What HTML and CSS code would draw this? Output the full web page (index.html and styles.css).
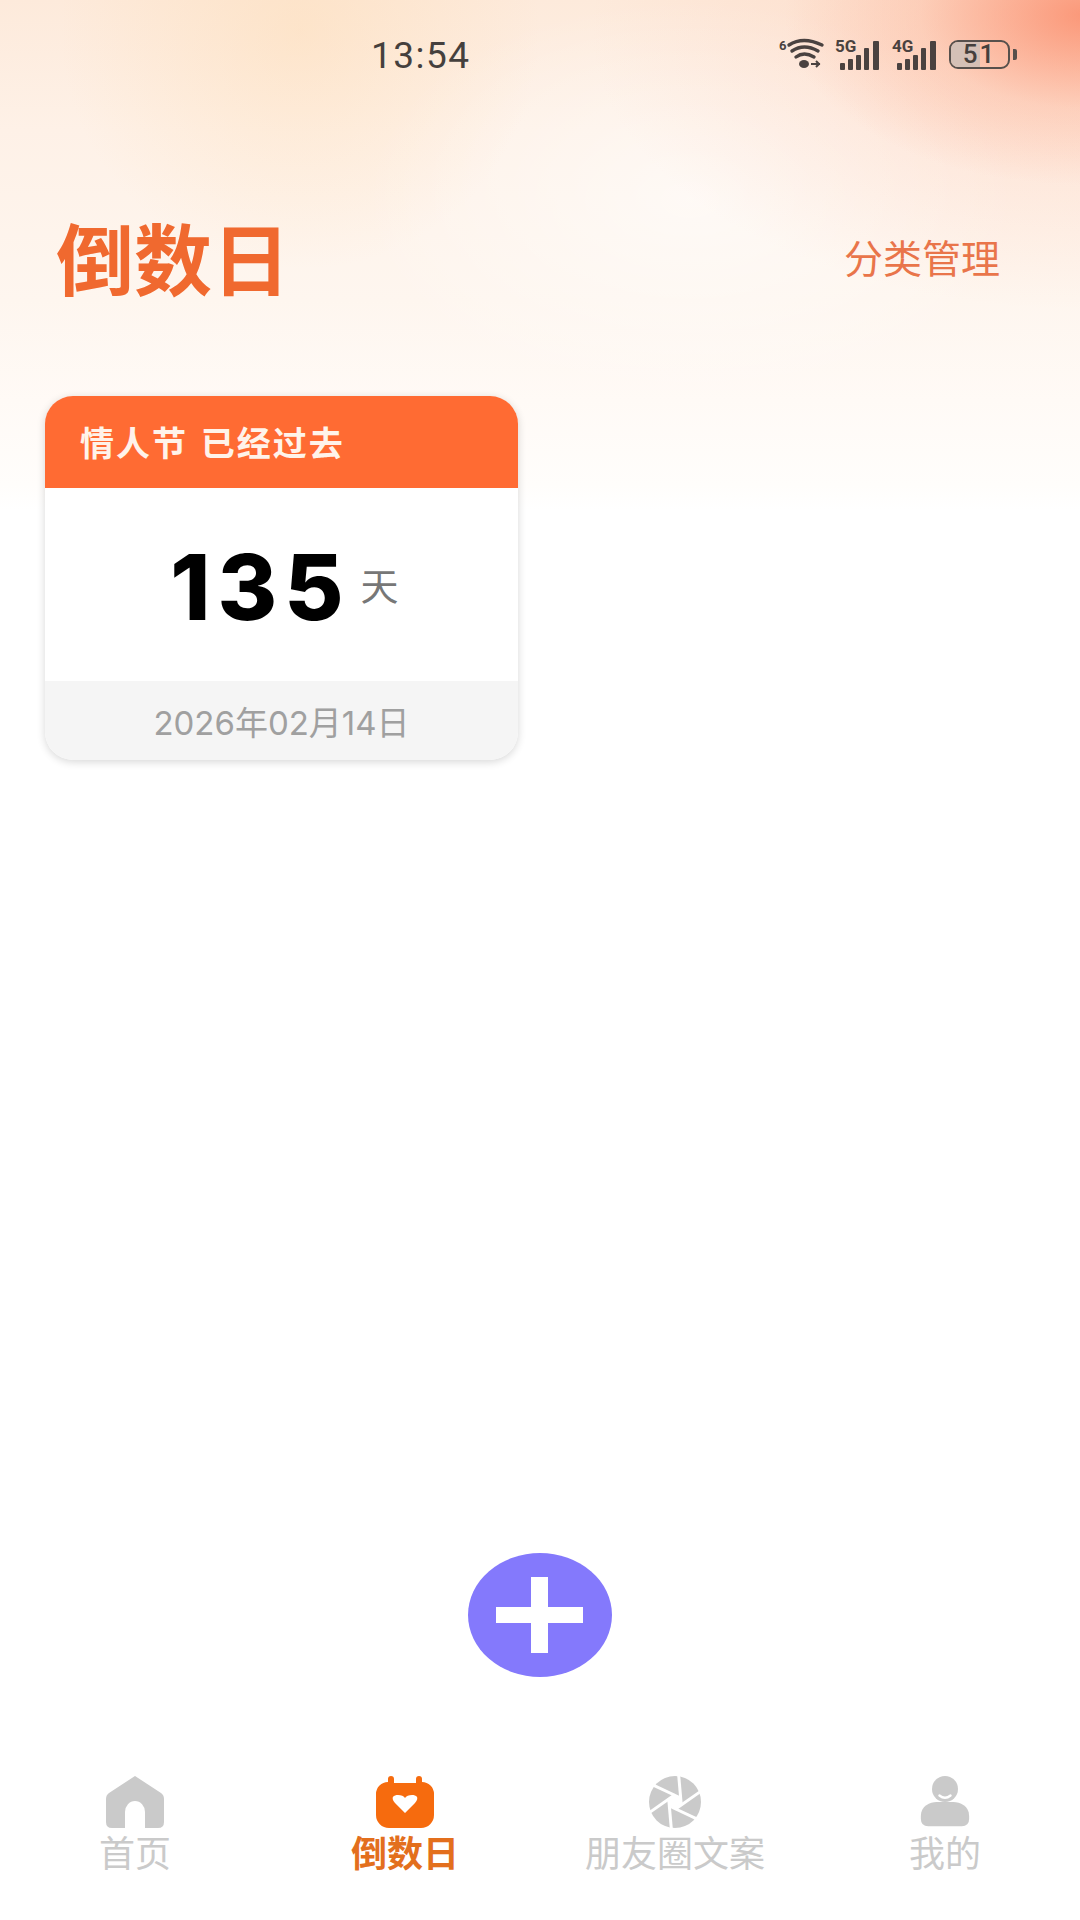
FILE: index.html
```html
<!DOCTYPE html>
<html lang="zh">
<head>
<meta charset="utf-8">
<title>倒数日</title>
<link rel="stylesheet" href="styles.css">
</head>
<body>
<div class="app">
  <div class="status">
    <span class="time">13:54</span>
    <div class="sys">
      <svg class="i-wifi" viewBox="0 0 46 34"><text x="1" y="13" class="sys-six">6</text><g fill="none" stroke="#4a4240" stroke-width="3.400" stroke-linecap="round"><path d="M11 8Q25 -1 44 8"/><path d="M14 14Q26 6 40 14"/><path d="M18 20Q26 14 36 20"/></g><ellipse cx="26" cy="27" rx="5" ry="4" fill="#4a4240"/><path d="M33 27h9M38 24l3 3-3 3" stroke="#4a4240" stroke-width="2" fill="none"/></svg>
      <svg class="i-sig" viewBox="0 0 46 34"><text x="0" y="15" class="sys-small">5G</text><g fill="#4a4240"><rect x="5" y="26" width="5" height="7" rx="1"/><rect x="13" y="22" width="5" height="11" rx="1"/><rect x="21" y="18" width="5" height="15" rx="1"/><rect x="29" y="11" width="5" height="22" rx="1"/><rect x="38" y="4" width="6" height="29" rx="1"/></g></svg>
      <svg class="i-sig" viewBox="0 0 46 34"><text x="0" y="15" class="sys-small">4G</text><g fill="#4a4240"><rect x="5" y="26" width="5" height="7" rx="1"/><rect x="13" y="22" width="5" height="11" rx="1"/><rect x="21" y="18" width="5" height="15" rx="1"/><rect x="29" y="11" width="5" height="22" rx="1"/><rect x="38" y="4" width="6" height="29" rx="1"/></g></svg>
      <div class="battery"><div class="battery-fill"></div><span class="battery-num">51</span></div>
      <div class="battery-tip"></div>
    </div>
  </div>

  <header class="head">
    <h1 class="title">倒数日</h1>
    <span class="manage">分类管理</span>
  </header>

  <main class="grid">
    <article class="card">
      <div class="card-top">情人节 已经过去</div>
      <div class="card-mid"><span class="num">135</span><span class="unit">天</span></div>
      <div class="card-foot">2026年02月14日</div>
    </article>
  </main>

  <button class="fab" aria-label="添加">
    <svg viewBox="0 0 88 76" class="plus"><path d="M35 0h17v30h35v16H52v30H35V46H0V30h35z" fill="#fff"/></svg>
  </button>

  <nav class="tabs">
    <div class="tab">
      <svg class="ico" viewBox="0 0 58 52"><path d="M29 0 L3 17Q0 19 0 23V46Q0 52 6 52H19V36A10 11 0 0 1 39 36V52H52Q58 52 58 46V23Q58 19 55 17Z" fill="#cacaca"/></svg>
      <span>首页</span>
    </div>
    <div class="tab on">
      <svg class="ico" viewBox="0 0 58 52"><path d="M12 6V3a3 3 0 0 1 3-3h0a3 3 0 0 1 3 3v4h22V3a3 3 0 0 1 3-3h0a3 3 0 0 1 3 3v3a12 12 0 0 1 12 12V39a13 13 0 0 1-13 13H13A13 13 0 0 1 0 39V18A12 12 0 0 1 12 6Z" fill="#f66b0e"/><path d="M29 37 L19 27C14 21 18 19 22 19C25 19 28 20 29 22C30 20 33 19 36 19C40 19 44 21 39 27Z" fill="#fff"/></svg>
      <span>倒数日</span>
    </div>
    <div class="tab">
      <svg class="ico" viewBox="0 0 58 52"><circle cx="29" cy="26" r="26" fill="#cacaca"/><g stroke="#fff" stroke-width="3"><line x1="35" y1="30" x2="35" y2="-2" transform="rotate(-5 29 26)"/><line x1="35" y1="30" x2="35" y2="-2" transform="rotate(55 29 26)"/><line x1="35" y1="30" x2="35" y2="-2" transform="rotate(115 29 26)"/><line x1="35" y1="30" x2="35" y2="-2" transform="rotate(175 29 26)"/><line x1="35" y1="30" x2="35" y2="-2" transform="rotate(235 29 26)"/><line x1="35" y1="30" x2="35" y2="-2" transform="rotate(295 29 26)"/></g><circle cx="29" cy="26" r="6" fill="#fff"/></svg>
      <span>朋友圈文案</span>
    </div>
    <div class="tab">
      <svg class="ico" viewBox="0 0 58 56"><circle cx="29" cy="14" r="14" fill="#cacaca"/><path d="M3 43C3 32 13 28 20 28H38C45 28 55 32 55 43V46Q55 54 47 54H11Q3 54 3 46Z" fill="#cacaca"/><path d="M23 21Q29 26 35 21" stroke="#fff" stroke-width="2.500" fill="none" stroke-linecap="round"/></svg>
      <span>我的</span>
    </div>
  </nav>
</div>
</body>
</html>
```

FILE: styles.css
```css
* { box-sizing: border-box; }
html, body { margin: 0; padding: 0; }
body {
  width: 1080px;
  height: 1920px;
  background: #fff;
  font-family: "Noto Sans CJK SC", "Noto Sans", sans-serif;
  overflow: hidden;
}
.app {
  position: relative;
  width: 1080px;
  height: 1920px;
  display: flex;
  flex-direction: column;
  background:
    radial-gradient(ellipse 300px 170px at 1085px 15px, rgba(250,130,95,.75), rgba(252,170,140,.32) 55%, rgba(255,220,205,0) 100%) no-repeat,
    radial-gradient(ellipse 500px 280px at 1090px 30px, rgba(253,190,165,.4), rgba(253,190,165,0) 100%) no-repeat,
    radial-gradient(ellipse 240px 240px at 300px 30px, rgba(253,214,165,.35), rgba(253,214,165,0) 100%) no-repeat,
    radial-gradient(ellipse 330px 200px at 690px 200px, rgba(255,255,255,.55), rgba(255,255,255,0) 100%) no-repeat,
    linear-gradient(180deg, #fdeadb 0, #fef1e7 130px, #fef6ef 300px, #fffaf6 400px, #fffdfb 485px, #fff 510px) no-repeat;
}
.status {
  height: 110px;
  flex: none;
  position: relative;
  display: flex;
  align-items: flex-start;
}
.time {
  margin: 37px 0 0 371px;
  font: 400 37px/1 "Roboto", sans-serif;
  letter-spacing: 1.500px;
  color: #45403d;
}
.sys {
  margin: 37px 0 0 auto;
  padding-right: 63px;
  display: flex;
  align-items: center;
  gap: 11px;
  height: 34px;
}
.i-wifi { width: 46px; height: 34px; overflow: visible; }
.i-sig { width: 46px; height: 34px; overflow: visible; }
.sys-small { font: 700 17px "Roboto", sans-serif; fill: #4a4240; }
.sys-six { font: 700 13px "Roboto", sans-serif; fill: #4a4240; }
.battery {
  position: relative;
  width: 61px;
  height: 29px;
  border: 2.500px solid #57504c;
  border-radius: 9px;
  overflow: hidden;
  display: flex;
  align-items: center;
  justify-content: center;
}
.battery-fill {
  position: absolute;
  left: 0; top: 0; bottom: 0;
  width: 51%;
  background: #d4c0b6;
}
.battery-num {
  position: relative;
  font: 500 26px/1 "Roboto", sans-serif;
  letter-spacing: 2px;
  color: #45403d;
}
.battery-tip {
  width: 4px;
  height: 11px;
  background: #57504c;
  border-radius: 0 2px 2px 0;
  margin-left: -8px;
}
.head {
  flex: none;
  height: 116px;
  margin-top: 88px;
  padding: 0 80px 0 56px;
  display: flex;
  align-items: center;
  justify-content: space-between;
}
.title {
  margin: 0;
  font-size: 78px;
  line-height: 1;
  font-weight: 700;
  color: #f0692f;
}
.manage {
  font-size: 39px;
  line-height: 1;
  color: #e9754a;
}
.grid {
  flex: 1;
  padding: 82px 0 0 45px;
  display: grid;
  grid-template-columns: 473px;
  align-content: start;
}
.card {
  height: 364px;
  border-radius: 28px;
  overflow: hidden;
  background: #fff;
  box-shadow: 0 2px 8px rgba(0,0,0,.16);
  display: flex;
  flex-direction: column;
}
.card-top {
  height: 92px;
  flex: none;
  background: #ff6b33;
  color: #fff3ea;
  font-size: 34px;
  font-weight: 700;
  line-height: 92px;
  letter-spacing: 2px;
  word-spacing: 3px;
  padding-left: 35px;
}
.card-mid {
  flex: 1;
  display: flex;
  align-items: center;
  justify-content: center;
  gap: 10px;
  padding: 6px 0 0 6px;
}
.num {
  font: 800 91px/1 "Inter", sans-serif;
  letter-spacing: 7px;
  color: #000;
}
.unit {
  font-size: 38px;
  line-height: 1;
  color: #777;
  margin-bottom: 8px;
}
.card-foot {
  height: 79px;
  flex: none;
  background: #f5f5f5;
  color: #a0a0a0;
  font-family: "Inter", "Noto Sans CJK SC", sans-serif;
  font-size: 33px;
  line-height: 84px;
  text-align: center;
}
.fab {
  position: absolute;
  left: 468px;
  top: 1553px;
  width: 144px;
  height: 124px;
  padding: 0;
  border: 0;
  border-radius: 50%;
  background: #8479fc;
  display: flex;
  align-items: center;
  justify-content: center;
}
.plus { width: 88px; height: 76px; display: block; }
.tabs {
  flex: none;
  height: 164px;
  display: grid;
  grid-template-columns: 270px 270px 270px 270px;
}
.tab {
  display: flex;
  flex-direction: column;
  align-items: center;
  padding-top: 20px;
  color: #cacaca;
  font-size: 36px;
  line-height: 46px;
}
.tab.on { color: #e36f1d; font-weight: 700; }
.ico { width: 58px; height: 52px; display: block; flex: none; }
```
